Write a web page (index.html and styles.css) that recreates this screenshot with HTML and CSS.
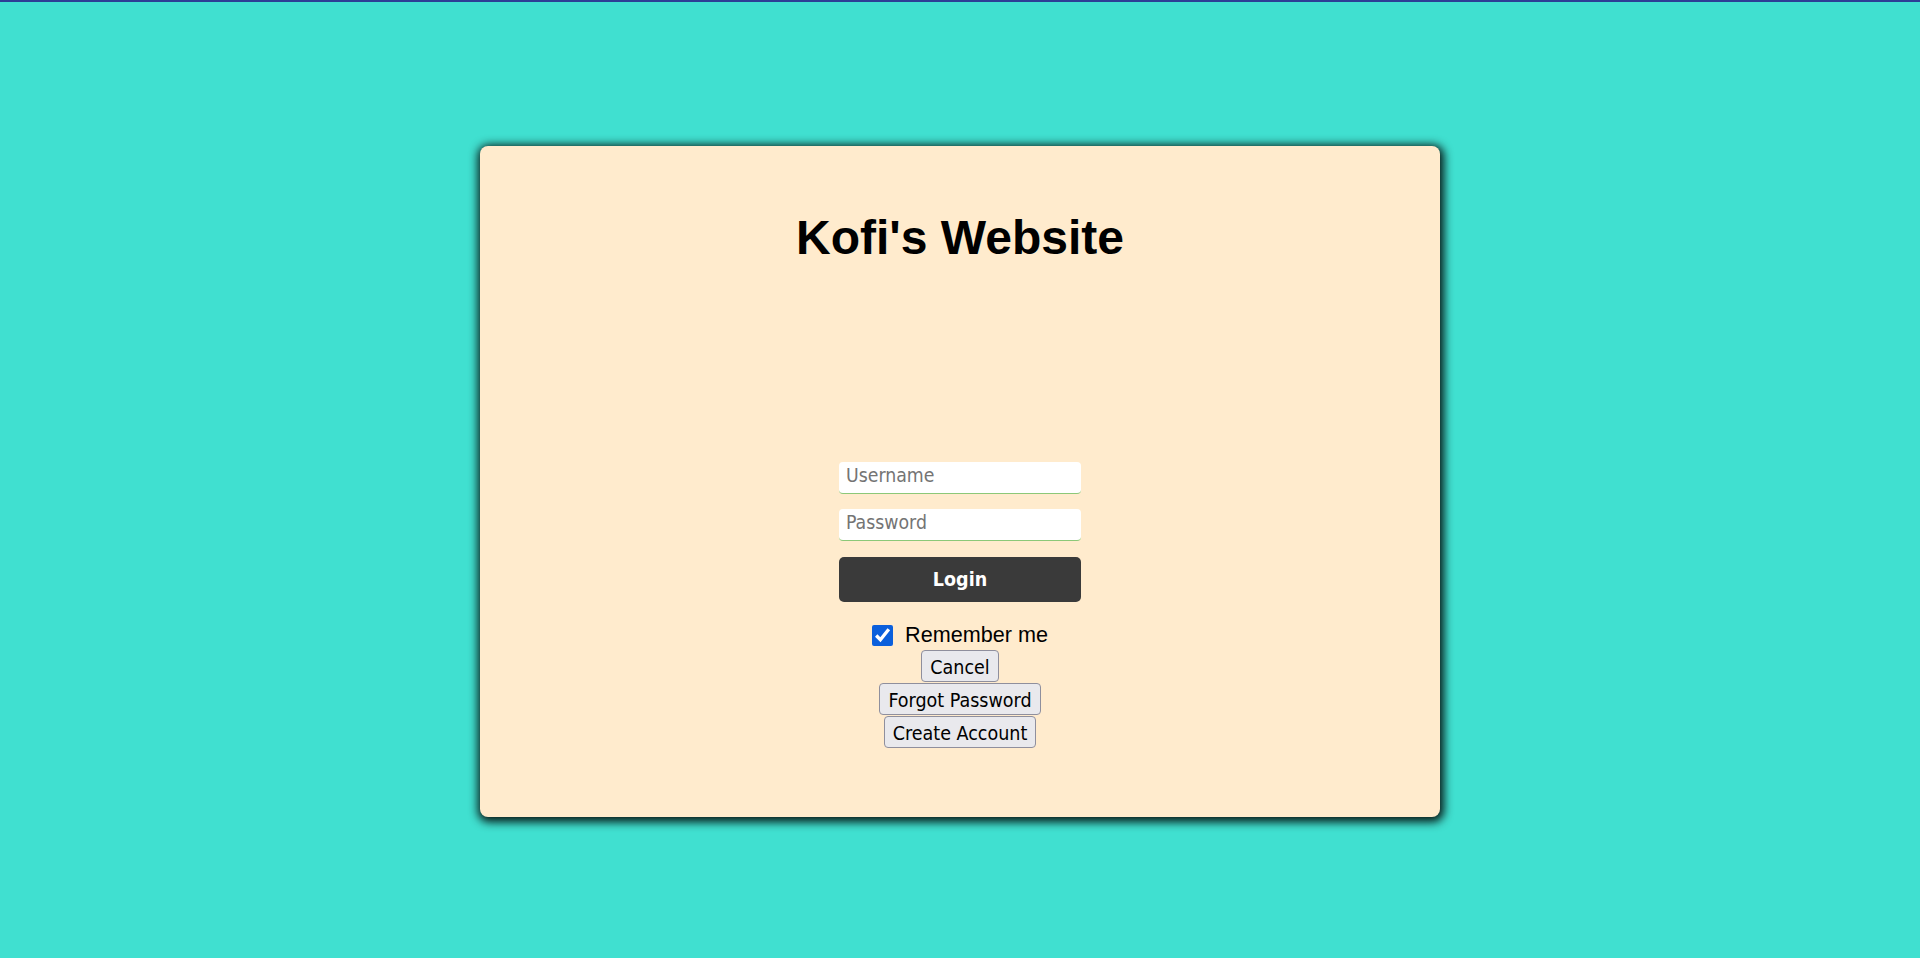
FILE: index.html
```html
<!DOCTYPE html>
<html lang="en">
<head>
<meta charset="utf-8">
<title>Kofi's Website</title>
<link rel="stylesheet" href="styles.css">
</head>
<body>
<div class="topbar"></div>
<main class="page">
  <section class="card">
    <h1 class="title">Kofi's Website</h1>
    <form class="login-form" onsubmit="return false">
      <input class="field" type="text" placeholder="Username">
      <input class="field" type="password" placeholder="Password">
      <button class="login-btn" type="submit">Login</button>
      <label class="remember">
        <input class="check" type="checkbox" checked>
        <span>Remember me</span>
      </label>
      <div class="actions">
        <button class="plain-btn" type="button">Cancel</button>
        <button class="plain-btn" type="button">Forgot Password</button>
        <button class="plain-btn" type="button">Create Account</button>
      </div>
    </form>
  </section>
</main>
</body>
</html>
```

FILE: styles.css
```css
html, body {
  margin: 0;
  padding: 0;
}

body {
  background: #40e0d0;
  min-height: 958px;
  font-family: "Liberation Sans", Arial, sans-serif;
}

.topbar {
  height: 2px;
  background: #2d3e96;
}

.page {
  padding-top: 144px;
  display: flex;
  justify-content: center;
}

.card {
  width: 960px;
  height: 671px;
  box-sizing: border-box;
  background: #ffebcd;
  border-radius: 8px;
  box-shadow: 1px 2px 10px 3px rgba(0, 0, 0, 0.9);
  padding-top: 64px;
  display: flex;
  flex-direction: column;
  align-items: center;
}

.title {
  margin: 0;
  font-family: "Liberation Sans", Arial, sans-serif;
  font-weight: bold;
  font-size: 48px;
  line-height: 56px;
  color: #000;
}

.login-form {
  margin-top: 196px;
  display: flex;
  flex-direction: column;
  align-items: center;
}

.field {
  width: 242px;
  height: 32px;
  box-sizing: border-box;
  margin: 0 0 15px 0;
  padding: 0 7px 5px 7px;
  border: none;
  border-bottom: 1px solid #8cc878;
  border-radius: 4px;
  background: #fff;
  font-family: "DejaVu Sans Condensed", "DejaVu Sans", sans-serif;
  font-stretch: condensed;
  font-size: 19.3px;
  color: #000;
  outline: none;
}

.field::placeholder {
  color: #747474;
}

.login-btn {
  width: 242px;
  height: 45px;
  margin-top: 1px;
  border: none;
  border-radius: 5px;
  background: #3a3a3a;
  color: #fff;
  font-family: "DejaVu Sans Condensed", "DejaVu Sans", sans-serif;
  font-stretch: condensed;
  font-weight: bold;
  font-size: 19.5px;
  cursor: pointer;
}

.remember {
  margin-top: 20px;
  height: 26px;
  display: flex;
  align-items: center;
  gap: 12px;
  font-family: "Liberation Sans", Arial, sans-serif;
  font-size: 21.6px;
  color: #000;
}

.check {
  margin: 0;
  width: 21px;
  height: 21px;
  accent-color: #0b5fdc;
}

.actions {
  margin-top: 2px;
  display: flex;
  flex-direction: column;
  align-items: center;
  gap: 1px;
}

.plain-btn {
  height: 32px;
  box-sizing: border-box;
  padding: 2px 8px 0 8px;
  border: 1px solid #8f8f9d;
  border-radius: 4px;
  background: #e9e9ed;
  color: #000;
  font-family: "DejaVu Sans Condensed", "DejaVu Sans", sans-serif;
  font-stretch: condensed;
  font-size: 19.5px;
  line-height: 27px;
  cursor: pointer;
}
```
